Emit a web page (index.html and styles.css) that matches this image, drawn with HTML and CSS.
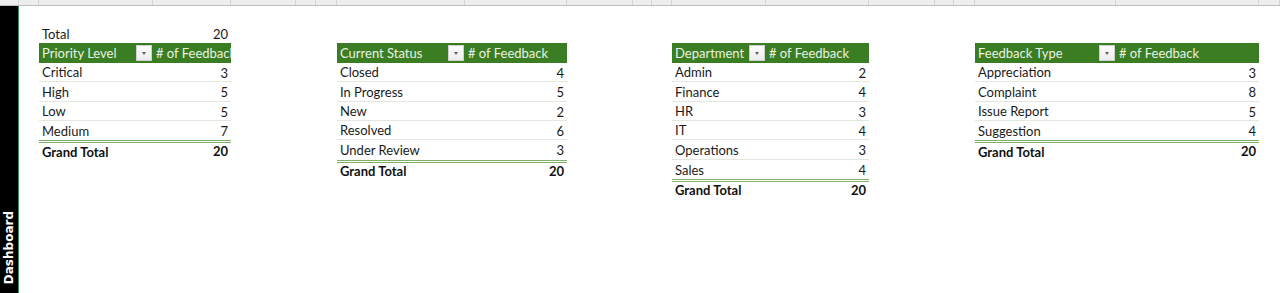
FILE: index.html
```html
<!DOCTYPE html>
<html lang="en">
<head>
<meta charset="utf-8">
<title>Dashboard</title>
<link rel="stylesheet" href="styles.css">
</head>
<body>
<div class="colbar">
  <span class="c" style="width:19px"></span><span class="c" style="width:20px"></span><span class="c" style="width:114px"></span><span class="c" style="width:78px"></span><span class="c" style="width:65px"></span><span class="c" style="width:20px"></span><span class="c" style="width:21px"></span><span class="c" style="width:128px"></span><span class="c" style="width:102px"></span><span class="c" style="width:66px"></span><span class="c" style="width:19px"></span><span class="c" style="width:20px"></span><span class="c" style="width:94px"></span><span class="c" style="width:103px"></span><span class="c" style="width:66px"></span><span class="c" style="width:19px"></span><span class="c" style="width:21px"></span><span class="c" style="width:141px"></span><span class="c" style="width:143px"></span><span class="c" style="width:21px"></span>
</div>
<div class="sheet">
  <aside class="tab"><span class="tab-label">Dashboard</span></aside>
  <main class="area">
    <section class="pivot p1">
      <div class="row total"><span class="lbl">Total</span><span class="val">20</span></div>
      <div class="row head"><span class="lbl">Priority Level<i class="dd"></i></span><span class="hval">#&nbsp;of Feedback</span></div>
      <div class="row"><span class="lbl">Critical</span><span class="val">3</span></div>
      <div class="row"><span class="lbl">High</span><span class="val">5</span></div>
      <div class="row"><span class="lbl">Low</span><span class="val">5</span></div>
      <div class="row last"><span class="lbl">Medium</span><span class="val">7</span></div>
      <div class="row grand"><span class="lbl">Grand Total</span><span class="val">20</span></div>
    </section>
    <section class="pivot p2">
      <div class="row blank"></div>
      <div class="row head"><span class="lbl">Current Status<i class="dd"></i></span><span class="hval">#&nbsp;of Feedback</span></div>
      <div class="row"><span class="lbl">Closed</span><span class="val">4</span></div>
      <div class="row"><span class="lbl">In Progress</span><span class="val">5</span></div>
      <div class="row"><span class="lbl">New</span><span class="val">2</span></div>
      <div class="row"><span class="lbl">Resolved</span><span class="val">6</span></div>
      <div class="row last"><span class="lbl">Under Review</span><span class="val">3</span></div>
      <div class="row grand"><span class="lbl">Grand Total</span><span class="val">20</span></div>
    </section>
    <section class="pivot p3">
      <div class="row blank"></div>
      <div class="row head"><span class="lbl">Department<i class="dd"></i></span><span class="hval"># of Feedback</span></div>
      <div class="row"><span class="lbl">Admin</span><span class="val">2</span></div>
      <div class="row"><span class="lbl">Finance</span><span class="val">4</span></div>
      <div class="row"><span class="lbl">HR</span><span class="val">3</span></div>
      <div class="row"><span class="lbl">IT</span><span class="val">4</span></div>
      <div class="row"><span class="lbl">Operations</span><span class="val">3</span></div>
      <div class="row last"><span class="lbl">Sales</span><span class="val">4</span></div>
      <div class="row grand"><span class="lbl">Grand Total</span><span class="val">20</span></div>
    </section>
    <section class="pivot p4">
      <div class="row blank"></div>
      <div class="row head"><span class="lbl">Feedback Type<i class="dd"></i></span><span class="hval">#&nbsp;of Feedback</span></div>
      <div class="row"><span class="lbl">Appreciation</span><span class="val">3</span></div>
      <div class="row"><span class="lbl">Complaint</span><span class="val">8</span></div>
      <div class="row"><span class="lbl">Issue Report</span><span class="val">5</span></div>
      <div class="row last"><span class="lbl">Suggestion</span><span class="val">4</span></div>
      <div class="row grand"><span class="lbl">Grand Total</span><span class="val">20</span></div>
    </section>
  </main>
</div>
</body>
</html>
```
FILE: styles.css
```css
html, body {
  margin: 0;
  padding: 0;
  background: #ffffff;
}
body {
  width: 1280px;
  height: 293px;
  overflow: hidden;
  font-family: Lato, "Open Sans", sans-serif;
  font-size: 13px;
  color: #1a1a1a;
}
.colbar {
  display: flex;
  height: 5px;
  background: #ededed;
  border-bottom: 1px solid #bdbdbd;
}
.colbar .c {
  box-sizing: border-box;
  height: 5px;
  border-right: 1px solid #d2d2d2;
  flex: none;
}
.sheet {
  display: flex;
  height: 287px;
}
.tab {
  width: 18px;
  flex: none;
  background: #000000;
  border-right: 1px solid #3e8c5e;
  display: flex;
  flex-direction: column;
  justify-content: flex-end;
  align-items: center;
  padding-bottom: 9px;
  box-sizing: content-box;
}
.tab-label {
  writing-mode: vertical-rl;
  transform: rotate(180deg);
  font-family: "DejaVu Sans", sans-serif;
  font-weight: bold;
  font-size: 12px;
  color: #ffffff;
  line-height: 18px;
}
.area {
  display: flex;
  align-items: flex-start;
  padding-left: 20px;
  padding-top: 18px;
}
.pivot {
  flex: none;
  display: flex;
  flex-direction: column;
}
.p1 { width: 192px; --lw: 114px; }
.p2 { width: 230px; --lw: 128px; margin-left: 106px; }
.p3 { width: 197px; --lw: 94px; margin-left: 105px; }
.p4 { width: 284px; --lw: 141px; margin-left: 106px; }
.row {
  display: flex;
  box-sizing: border-box;
  height: 19.4px;
  border-bottom: 1px solid #e3e8df;
  white-space: nowrap;
}
.row.total, .row.blank, .row.head, .row.grand, .row.last {
  border-bottom: none;
}
.row .lbl {
  width: var(--lw);
  flex: none;
  box-sizing: border-box;
  padding-left: 3px;
  display: flex;
  align-items: center;
  justify-content: space-between;
  overflow: hidden;
}
.row .val {
  flex: 1;
  text-align: right;
  padding-right: 3px;
}
.row .lbl, .row .val {
  padding-top: 2px;
  line-height: 17.4px;
}
.row.head {
  background: #3b7d23;
  color: #e9f2e4;
}
.row.head .lbl, .row.head .hval {
  padding-top: 1px;
  line-height: 18.4px;
}
.row.head .hval {
  flex: 1;
  padding-left: 3px;
  overflow: hidden;
}
.dd {
  width: 16px;
  height: 16px;
  flex: none;
  margin-right: 1px;
  margin-top: -1px;
  box-sizing: border-box;
  background: linear-gradient(#fdfdfd, #ececec);
  border: 1px solid #d0d0d0;
  position: relative;
}
.dd::after {
  content: "";
  position: absolute;
  left: 5px;
  top: 6px;
  border-left: 2.5px solid transparent;
  border-right: 2.5px solid transparent;
  border-top: 3px solid #606060;
}
.row.grand {
  font-weight: bold;
  color: #111111;
  border-top: 3px double #80b06a;
}
.row.grand .lbl, .row.grand .val {
  padding-top: 0;
  line-height: 16px;
}
```
